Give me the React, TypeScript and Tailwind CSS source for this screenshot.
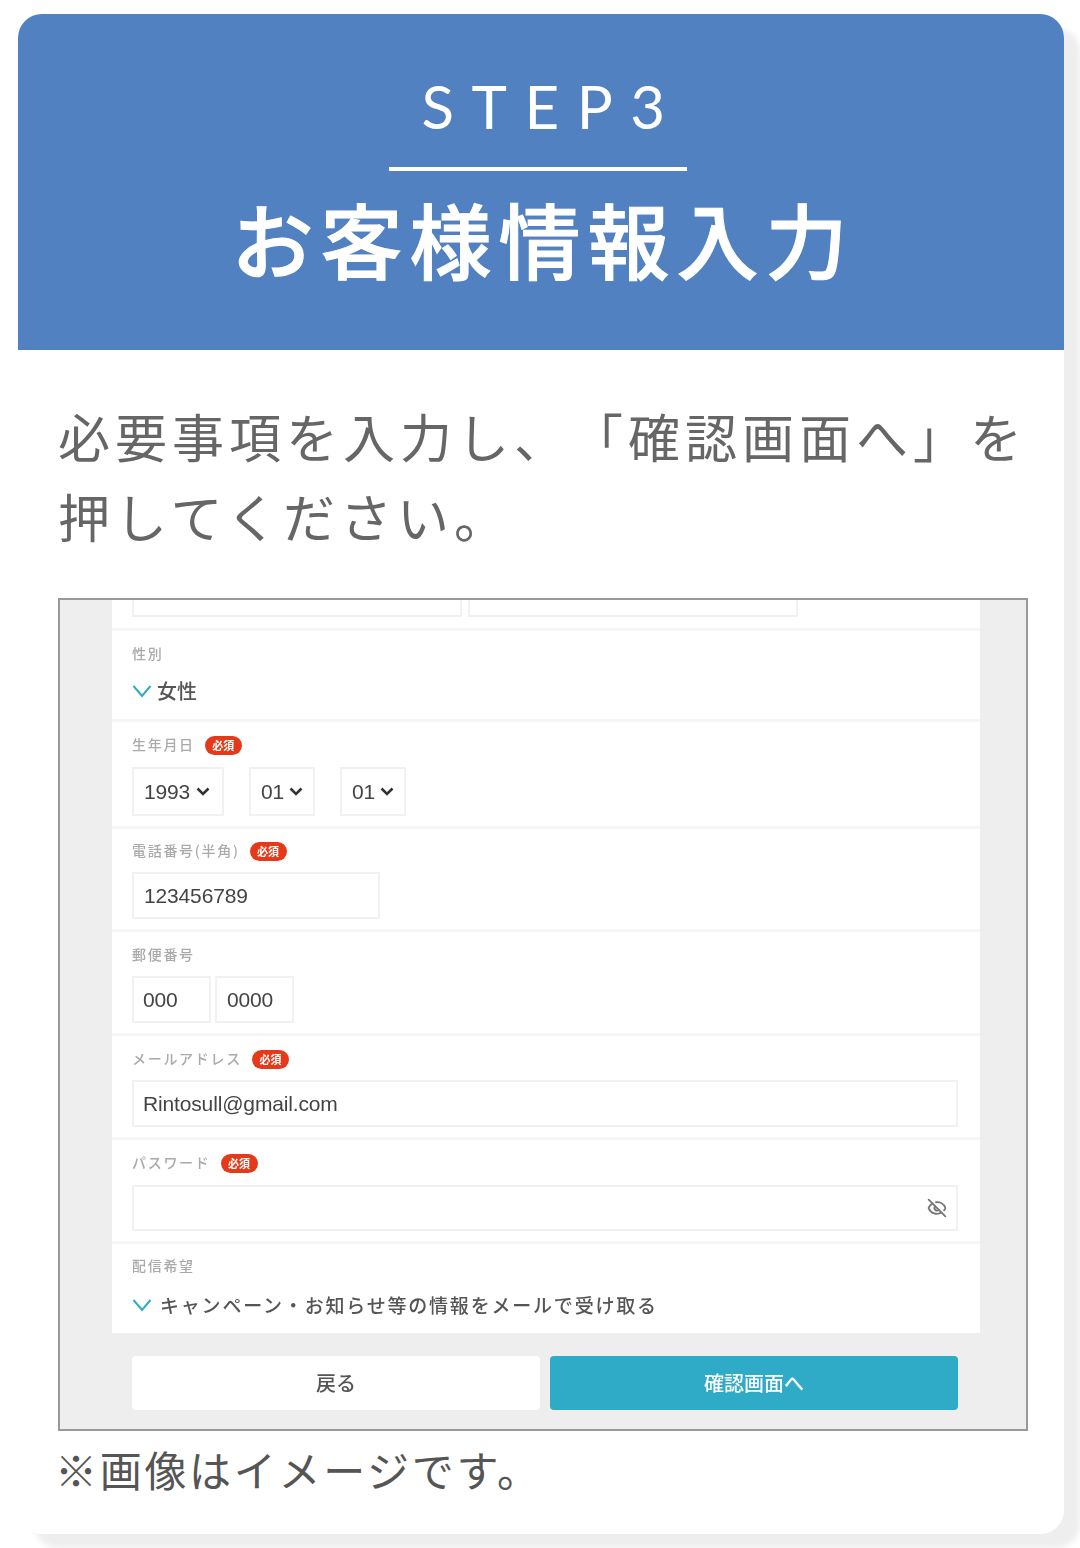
import React from "react";
import { EyeOff } from "lucide-react";

const JP = "font-['Noto_Sans_CJK_JP','Noto_Sans',sans-serif]";

const Badge = () => (
  <span className="mt-1 flex h-[19px] w-[37px] items-center justify-center rounded-full bg-[#e5391a] text-[11px] leading-none font-bold text-white">
    必須
  </span>
);

const Tick = () => (
  <svg width="20" height="14" viewBox="0 0 20 14" fill="none" className="shrink-0">
    <path d="M1.5 2 L10 12 L18.5 2" stroke="#2fabc7" strokeWidth="2" />
  </svg>
);

const Caret = () => (
  <svg width="14" height="9" viewBox="0 0 14 9" fill="none" className="shrink-0">
    <path d="M1.5 1.5 L7 7 L12.5 1.5" stroke="#333" strokeWidth="2.6" />
  </svg>
);

const Label = ({ text, required }: { text: string; required?: boolean }) => (
  <div className="flex h-[19px] items-center gap-[10px]">
    <span className="text-[14px] leading-none font-medium tracking-[1.7px] text-[#aaa]">{text}</span>
    {required && <Badge />}
  </div>
);

const Box = ({ className, children }: { className: string; children?: React.ReactNode }) => (
  <div className={`flex items-center border-2 border-[#f1f1f1] bg-white font-['Liberation_Sans',sans-serif] text-[21px] leading-none tracking-[-0.15px] text-[#444] ${className}`}>
    {children}
  </div>
);

const Row = ({ className, children }: { className: string; children: React.ReactNode }) => (
  <div className={`flex flex-col bg-white pl-5 pr-[22px] not-last:mb-[3px] ${className}`}>{children}</div>
);

export default function App() {
  return (
    <div className={`min-h-[1548px] w-[1080px] overflow-hidden bg-white pl-[18px] pt-[14px] ${JP}`}>
      <div className="h-[1520px] w-[1046px] rounded-[24px] bg-white shadow-[16px_14px_6px_#eeeeee]">
        <header className="flex h-[336px] flex-col items-center rounded-t-[24px] bg-[#5281c1] pr-[6px] pt-[57px] text-white">
          <div className="h-[71px] pl-[28px] font-['Lato',sans-serif] text-[60px] leading-[71px] font-normal tracking-[17.5px]">STEP3</div>
          <div className="mt-[25px] h-1 w-[298px] bg-white" />
          <h1 className="ml-[10px] mt-[17px] text-[82px] leading-[100px] font-medium tracking-[7px] [-webkit-text-stroke:1px_white]">お客様情報入力</h1>
        </header>

        <div className="px-10 pt-[46px]">
          <p className="-mr-5 text-[52px] leading-[80px] tracking-[5px] text-[#666] [text-spacing-trim:space-all]">
            必要事項を入力し、「確認画面へ」を
            <br />
            押してください。
          </p>

          <div className="mt-[42px] h-[833px] w-[970px] border-2 border-[#999] bg-[#eee] blur-[0.7px]">
            <div className="ml-[52px] flex w-[868px] flex-col bg-[#f6f6f6]">
              <Row className="h-[28px] flex-row gap-[6px]">
                <Box className="h-[17px] w-[330px] border-t-0" />
                <Box className="h-[17px] w-[330px] border-t-0" />
              </Row>
              <Row className="h-[88px] pt-[12px]">
                <Label text="性別" />
                <div className="mt-[19px] flex items-center gap-[5px] text-[20px] leading-none font-medium text-[#555]">
                  <Tick />
                  女性
                </div>
              </Row>
              <Row className="h-[104px] pt-[12px]">
                <Label text="生年月日" required />
                <div className="mt-[14px] flex">
                  <Box className="h-[49px] w-[92px] gap-[6px] pl-[10px]"><span>1993</span><Caret /></Box>
                  <Box className="ml-[25px] h-[49px] w-[66px] gap-[5px] pl-[10px]"><span>01</span><Caret /></Box>
                  <Box className="ml-[25px] h-[49px] w-[66px] gap-[5px] pl-[10px]"><span>01</span><Caret /></Box>
                </div>
              </Row>
              <Row className="h-[100px] pt-[11px]">
                <Label text="電話番号(半角)" required />
                <Box className="mt-[13px] h-[47px] w-[248px] pl-[10px]">123456789</Box>
              </Row>
              <Row className="h-[101px] pt-[12px]">
                <Label text="郵便番号" />
                <div className="mt-[13px] flex gap-1">
                  <Box className="h-[47px] w-[79px] pl-[9px]">000</Box>
                  <Box className="h-[47px] w-[79px] pl-[10px]">0000</Box>
                </div>
              </Row>
              <Row className="h-[101px] pt-[12px]">
                <Label text="メールアドレス" required />
                <Box className="mt-[13px] h-[47px] pl-[9px]">Rintosull@gmail.com</Box>
              </Row>
              <Row className="h-[101px] pt-[12px]">
                <Label text="パスワード" required />
                <Box className="mt-[14px] h-[46px] justify-end pr-[9px]">
                  <EyeOff size={20} color="#777" strokeWidth={2.2} />
                </Box>
              </Row>
              <Row className="h-[89px] pt-[11px]">
                <Label text="配信希望" />
                <div className="mt-[21px] flex items-center gap-[8px] text-[19px] leading-none font-medium tracking-[1.8px] text-[#555]">
                  <Tick />
                  キャンペーン・お知らせ等の情報をメールで受け取る
                </div>
              </Row>
            </div>

            <div className="ml-[72px] mt-[23px] flex w-[826px] gap-[10px]">
              <button className="flex h-[54px] flex-1 items-center justify-center rounded-[4px] bg-white text-[20px] font-medium text-[#555]">戻る</button>
              <button className="flex h-[54px] flex-1 items-center justify-center rounded-[4px] bg-[#2fabc7] text-[20px] font-medium text-white">確認画面へ</button>
            </div>
          </div>

          <p className="mt-[12px] -ml-[3px] text-[42px] leading-[52px] tracking-[2.7px] text-[#555]">※画像はイメージです。</p>
        </div>
      </div>
    </div>
  );
}
